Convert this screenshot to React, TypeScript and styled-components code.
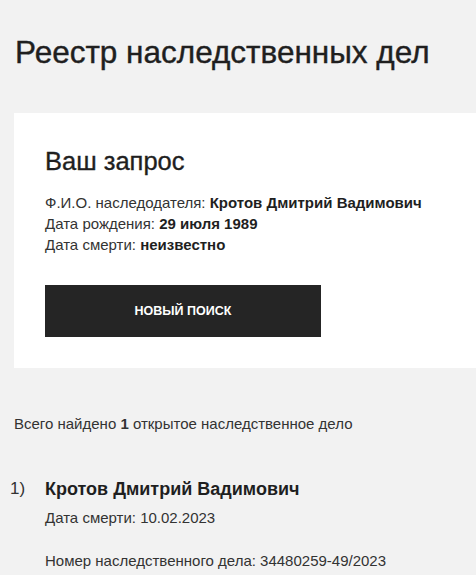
import React from 'react';
import styled, { createGlobalStyle } from 'styled-components';

const GlobalStyle = createGlobalStyle`
  html, body {
    margin: 0;
    padding: 0;
    background: #f2f2f2;
  }
  body {
    font-family: 'Liberation Sans', Arial, sans-serif;
    color: #222222;
  }
`;

const Page = styled.div`
  padding: 34px 0 0 14px;
  overflow: hidden;
`;

const Title = styled.h1`
  margin: 0 0 0 1px;
  font-size: 31.5px;
  line-height: 36px;
  font-weight: 400;
  color: #1f1f1f;
  -webkit-text-stroke: 0.4px #1f1f1f;
`;

const Card = styled.section`
  margin-top: 43px;
  background: #ffffff;
  padding: 34px 31px 31px;
`;

const CardTitle = styled.h2`
  margin: 0 0 17px;
  font-size: 25.5px;
  line-height: 28px;
  font-weight: 400;
  color: #1f1f1f;
  -webkit-text-stroke: 0.35px #1f1f1f;
`;

const InfoLine = styled.p`
  margin: 0;
  font-size: 15px;
  line-height: 21px;
  color: #333333;

  b {
    font-weight: 700;
    color: #1f1f1f;
  }
`;

const Button = styled.button`
  margin-top: 30px;
  width: 276px;
  height: 52px;
  border: none;
  background: #252525;
  color: #ffffff;
  font-family: 'Liberation Sans', Arial, sans-serif;
  font-size: 12.5px;
  font-weight: 700;
  text-transform: uppercase;
  cursor: pointer;
`;

const Summary = styled.p`
  margin: 46px 0 0;
  font-size: 15px;
  line-height: 20px;
  color: #333333;
`;

const Result = styled.div`
  margin-top: 43px;
  margin-left: -4px;
  display: grid;
  grid-template-columns: 35px 1fr;
`;

const Index = styled.span`
  font-size: 17px;
  line-height: 24px;
  color: #333333;
`;

const ResultBody = styled.div`
  display: flex;
  flex-direction: column;
`;

const ResultName = styled.h3`
  margin: 0;
  font-size: 18px;
  line-height: 24px;
  font-weight: 700;
  color: #1f1f1f;
`;

const ResultLine = styled.p<{ $gap?: number }>`
  margin: ${(p) => p.$gap ?? 0}px 0 0;
  font-size: 15px;
  line-height: 20px;
  color: #333333;
`;

export default function App() {
  return (
    <>
      <GlobalStyle />
      <Page>
        <Title>Реестр наследственных дел</Title>
        <Card>
          <CardTitle>Ваш запрос</CardTitle>
          <InfoLine>
            Ф.И.О. наследодателя: <b>Кротов Дмитрий Вадимович</b>
          </InfoLine>
          <InfoLine>
            Дата рождения: <b>29 июля 1989</b>
          </InfoLine>
          <InfoLine>
            Дата смерти: <b>неизвестно</b>
          </InfoLine>
          <Button>Новый поиск</Button>
        </Card>
        <Summary>
          Всего найдено <b>1</b> открытое наследственное дело
        </Summary>
        <Result>
          <Index>1)</Index>
          <ResultBody>
            <ResultName>Кротов Дмитрий Вадимович</ResultName>
            <ResultLine $gap={7}>Дата смерти: 10.02.2023</ResultLine>
            <ResultLine $gap={23}>Номер наследственного дела: 34480259-49/2023</ResultLine>
          </ResultBody>
        </Result>
      </Page>
    </>
  );
}
